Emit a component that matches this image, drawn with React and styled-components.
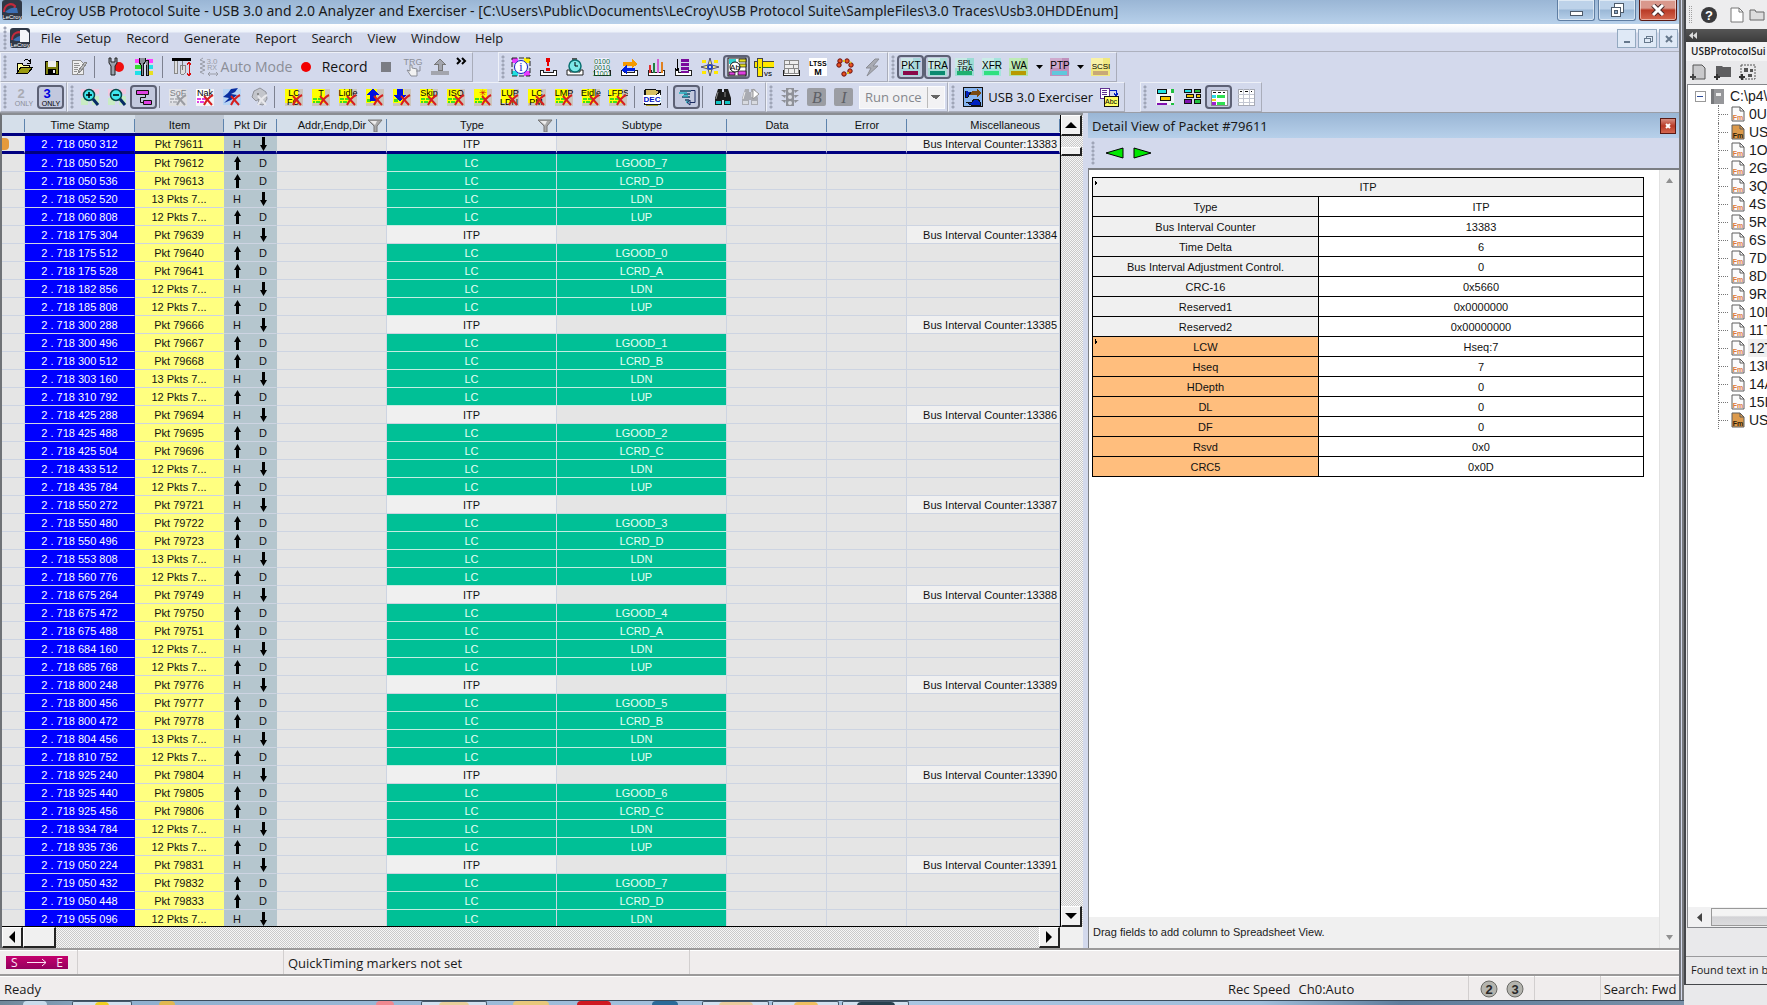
import React from 'react';
import styled, { createGlobalStyle, css } from 'styled-components';

const UI = '"Open Sans", "Noto Sans", sans-serif';
const ARIAL = '"Liberation Sans", Arial, sans-serif';

const Global = createGlobalStyle`
  *, *::before, *::after { box-sizing: border-box; }
  body { margin: 0; background: #e9e9eb; overflow: hidden; }
  button, select { font: inherit; color: inherit; }
  button { border: 0; background: none; padding: 0; margin: 0; }
  svg { display: block; flex: none; }
`;

/* ---------- frame ---------- */
const Desktop = styled.div`
  display: grid;
  grid-template-columns: minmax(0, 1fr) 83px;
  height: 100vh;
  font: 14px/18px ${UI};
  color: #1a1a1a;
`;
const AppWindow = styled.main`
  display: flex;
  flex-direction: column;
  min-width: 0;
  min-height: 0;
  background: #d3d9ec;
`;
const Framed = styled.div`
  display: flex;
  flex-direction: column;
  flex: 1;
  min-height: 0;
  border-right: 5px double #77797d;
`;
const TitleBar = styled.header`
  display: flex;
  align-items: flex-start;
  gap: 8px;
  height: 24px;
  padding: 0 2px;
  background: linear-gradient(#9ab6d5, #b7d0ea);
`;
const TitleText = styled.h1`
  flex: 1;
  margin: 0;
  font: 400 14px/22px "Noto Sans", sans-serif;
  white-space: nowrap;
  overflow: hidden;
`;
const CaptionGroup = styled.div`
  display: flex;
  gap: 3px;
`;
const Caption = styled.button`
  display: grid;
  place-items: center;
  width: 38px;
  height: 21px;
  border: 1px solid ${p => (p.$close ? '#5a1a14' : '#5f7ea3')};
  border-top: 0;
  border-radius: 0 0 3px 3px;
  box-shadow: inset 0 0 0 1px rgba(255, 255, 255, 0.5);
  background: ${p => (p.$close
    ? 'linear-gradient(#d9988c 0 40%, #b93a26 50%, #d4674f)'
    : 'linear-gradient(#bdd2e9 0 45%, #9ab7d6 50%, #b7d0ea)')};
`;
const MenuBar = styled.nav`
  display: flex;
  align-items: center;
  height: 28px;
  padding-left: 3px;
  border-bottom: 1px solid #adb1be;
  background: linear-gradient(#fff 0, #edf2fa 8px, #d3d9ec 9px);
`;
const MenuItem = styled.button`
  padding: 0 8px 0 7px;
  font: 13px/18px ${UI};
`;
const ChildButtons = styled.div`
  display: flex;
  gap: 2px;
  margin: 2px 1px 0 auto;
`;
const ChildButton = styled.button`
  display: grid;
  place-items: center;
  width: 19px;
  height: 19px;
  border: 1px solid #93a9c0;
  background: #dfe9f6;
`;

/* ---------- toolbars ---------- */
const ToolRow = styled.div`
  display: flex;
  height: ${p => p.$h}px;
  border-bottom: ${p => (p.$last ? '1px solid #9a9da6' : '0')};
`;
const Strip = styled.div`
  display: flex;
  align-items: center;
  padding: 0 2px;
  margin-right: ${p => p.$after || 0}px;
  border-right: 1px solid #a9adba;
  border-bottom: 1px solid #a9adba;
  border-top: 1px solid #eef1f8;
  border-left: 1px solid #eef1f8;
`;
const Grip = styled.i`
  width: 4px;
  height: 24px;
  margin-right: ${p => p.$after ?? 3}px;
  background: radial-gradient(circle at 2px 2px, #9fa5b7 1px, transparent 2px) 0 0 / 4px 4px;
`;
const Tool = styled.button`
  display: flex;
  align-items: center;
  justify-content: center;
  gap: 2px;
  width: ${p => p.$w || 27}px;
  height: 24px;
  flex: none;
  white-space: nowrap;
  font: ${p => p.$size || 14}px/18px ${UI};
  color: ${p => (p.$dim ? '#8b8e97' : '#111')};
  ${p => p.$on && css`
    border: 2px solid #5d6175;
    border-radius: 4px;
    background: #c2c8de;
  `}
`;
const Divider = styled.i`
  width: 1px;
  height: 22px;
  margin: 0 ${p => p.$r ?? 4}px 0 ${p => p.$l ?? 3}px;
  background: #7d8190;
`;
const RunSelect = styled.select`
  appearance: none;
  width: 86px;
  height: 23px;
  margin-left: 2px;
  padding: 0 0 0 5px;
  border: 1px solid #fafbfd;
  border-radius: 0;
  font: 13px/18px ${UI};
  color: #85878d;
  opacity: 1;
  background:
    linear-gradient(to bottom left, #666 50%, transparent 50%) right 3px center / 5px 5px no-repeat,
    linear-gradient(to bottom right, #666 50%, transparent 50%) right 8px center / 5px 5px no-repeat,
    linear-gradient(#bbb, #bbb) right 16px center / 1px 100% no-repeat,
    #f2f2f4;
  background:
    linear-gradient(to top left, transparent 50%, #666 50%) right 3px center / 5px 5px no-repeat,
    linear-gradient(to top right, transparent 50%, #666 50%) right 8px center / 5px 5px no-repeat,
    linear-gradient(#bbb, #bbb) right 16px center / 1px 100% no-repeat,
    #f2f2f4;
`;

/* ---------- work area ---------- */
const Work = styled.div`
  display: grid;
  grid-template-columns: minmax(0, 1083fr) 5px minmax(0, 591fr);
  flex: 1;
  min-height: 0;
`;
const GridPane = styled.section`
  display: grid;
  grid-template: minmax(0, 1fr) 21px / minmax(0, 1fr) 23px;
  min-height: 0;
  border-top: 2px solid #8a8d92;
  border-left: 2px solid #6f7276;
  background: #f0f0f0;
`;
const GridBody = styled.div`
  overflow: hidden;
  min-height: 0;
  border-bottom: 1px solid #000;
  background: #e5e5e5;
`;
const checker = 'repeating-conic-gradient(#c9c9c9 0 25%, #f6f6f6 0 50%) 0 0 / 2px 2px';
const VTrack = styled.div`
  display: flex;
  flex-direction: column;
  justify-content: space-between;
  border-left: 1px solid #000;
  background: ${checker};
`;
const HTrack = styled.div`
  display: flex;
  background: ${checker};
`;
const ScrollKey = styled.button`
  display: grid;
  place-items: center;
  width: ${p => p.$w || 21}px;
  height: ${p => p.$h || 21}px;
  margin-left: ${p => (p.$end ? 'auto' : '0')};
  background: #f0f0f0;
  border: solid #fff;
  border-width: 1px 2px 2px 1px;
  border-right-color: #222;
  border-bottom-color: #222;
`;
const VGroup = styled.div`
  display: flex;
  flex-direction: column;
  gap: 11px;
`;
const Sheet = styled.table`
  width: 100%;
  table-layout: fixed;
  border-collapse: separate;
  border-spacing: 0;
  font: 11px/14px ${ARIAL};
  color: #111;
  text-align: center;
`;
const HeadCell = styled.th`
  height: 21px;
  padding: 2px ${p => p.$padRight || 0}px 0 0;
  font-weight: 400;
  text-align: ${p => (p.$padRight ? 'right' : 'center')};
  border-bottom: 3px solid #000080;
  background:
    linear-gradient(#5d83ad, #5d83ad) right 4px / 1px 13px no-repeat,
    ${p => (p.$shade ? '#bfc8d4' : '#d5dfea')};
`;
const HeadFlex = styled.div`
  display: grid;
  grid-template-columns: 20px 1fr 20px;
  align-items: center;
`;
const fills = {
  lead: ['#e5e5e5', '#111'],
  time: ['#0000ff', '#fff'],
  item: ['#ffff80', '#111'],
  dir: ['#b5c6ce', '#111'],
  lc: ['#00c096', '#e8fff4'],
  itp: ['#f0f0f0', '#111'],
  none: ['#e5e5e5', '#111'],
};
const Cell = styled.td`
  height: 18px;
  padding: 0 ${p => (p.$right ? 2 : 0)}px 0 0;
  white-space: nowrap;
  text-align: ${p => (p.$right ? 'right' : 'center')};
  color: ${p => fills[p.$fill][1]};
  background: ${p => fills[p.$fill][0]};
  border-right: 1px solid ${p => (['time', 'item', 'dir'].includes(p.$fill) ? fills[p.$fill][0] : '#cdd4e2')};
  border-bottom: 1px solid ${p => (p.$fill === 'lc' ? '#c4eee2' : '#cdd4e2')};
  tr:first-child > & { border-bottom: 3px solid #000080; }
`;
const DirBox = styled.div`
  display: grid;
  grid-template-columns: 1fr 1fr;
  place-items: center;
`;
const Marker = styled.div`
  width: 7px;
  height: 12px;
  border-radius: 0 4px 4px 0;
  background: #e59a3c;
`;
const Splitter = styled.div`
  background: #d3d9ec;
`;

/* ---------- detail pane ---------- */
const DetailPane = styled.section`
  display: flex;
  flex-direction: column;
  min-height: 0;
`;
const DetailTitle = styled.header`
  display: flex;
  align-items: center;
  justify-content: space-between;
  height: 25px;
  padding: 0 3px 0 4px;
  background: linear-gradient(#9ab6d5, #b7d0ea);
`;
const DetailHeading = styled.h2`
  margin: 0;
  font: 400 13px/20px "Noto Sans", sans-serif;
`;
const TinyClose = styled.button`
  display: grid;
  place-items: center;
  width: 16px;
  height: 16px;
  border: 1px solid #5a1a14;
  background: linear-gradient(#d68d80, #b93a26 50%, #d4674f);
`;
const DetailTools = styled.div`
  display: flex;
  align-items: center;
  height: 30px;
  padding-left: 3px;
`;
const DetailBody = styled.div`
  display: grid;
  grid-template: minmax(0, 1fr) 31px / minmax(0, 1fr) 20px;
  flex: 1;
  min-height: 0;
  border-top: 2px solid #7b7e83;
  border-left: 1px solid #7b7e83;
  background: #fff;
`;
const DetailSheetWrap = styled.div`
  padding: 7px 15px 0 3px;
`;
const DetailSheet = styled.table`
  width: 100%;
  table-layout: fixed;
  border-collapse: collapse;
  font: 11px/14px ${ARIAL};
  color: #111;
  text-align: center;
`;
const DCell = styled.td`
  height: ${p => p.$h || 20}px;
  padding: 0;
  font-weight: 400;
  border: 1px solid #000;
  background: ${p => p.$bg || '#fff'};
  ${p => p.$mark && css`
    background:
      linear-gradient(to top right, #000 50%, transparent 50%) 2px 2px / 3px 3px no-repeat,
      linear-gradient(to bottom right, #000 50%, transparent 50%) 2px 5px / 3px 3px no-repeat,
      ${p.$bg};
  `}
`;
const Hint = styled.p`
  margin: 0;
  padding: 8px 4px;
  font: 11px/14px ${ARIAL};
  background: #f0f0f0;
`;
const SoftTrack = styled.div`
  grid-row: 1 / 3;
  grid-column: 2;
  display: flex;
  flex-direction: column;
  align-items: center;
  justify-content: space-between;
  padding: 8px 0;
  border-left: 1px solid #e2e2e2;
  background: #efefef;
`;

/* ---------- bottom ---------- */
const Bar = styled.footer`
  display: flex;
  height: 26px;
  border-top: 2px solid #9b9a9a;
  background: #f0eded;
  box-shadow: inset 0 1px #fff;
`;
const Pane = styled.div`
  display: flex;
  align-items: center;
  gap: 8px;
  width: ${p => (p.$w ? `${p.$w}px` : 'auto')};
  flex: ${p => (p.$w ? 'none' : 1)};
  justify-content: ${p => p.$justify || 'flex-start'};
  padding: 1px 4px 0;
  white-space: nowrap;
  font: 13px/18px ${UI};
  border-left: ${p => (p.$line ? '1px solid #d2cfcf' : '0')};
`;
const SpanMark = styled.button`
  display: flex;
  align-items: center;
  justify-content: space-between;
  width: 62px;
  height: 13px;
  margin-left: 2px;
  padding: 0 5px;
  font: 12px/13px ${UI};
  color: #ffe4f6;
  background: linear-gradient(#c4006c, #94005f);
`;
const TaskBar = styled.div`
  display: flex;
  height: 5px;
  border-top: 1px solid #3c4c5c;
  background: linear-gradient(90deg, #6f8799 0, #8fb0cf 120px, #a9c6e2 900px, #a0bedb 1260px, #5e7d9c 1400px, #7890a8);
`;
const TaskItem = styled.i`
  display: flex;
  justify-content: center;
  width: ${p => p.$w}px;
  margin-left: ${p => p.$gap}px;
  border: ${p => (p.$open ? '1px solid #45586a' : '0')};
  border-bottom: 0;
  border-radius: 2px 2px 0 0;
  background: ${p => (p.$open ? '#d3e2f0' : 'transparent')};
  &::after { content: ''; width: ${p => p.$dot}px; height: 4px; border-radius: 4px 4px 0 0; background: ${p => p.$c}; }
`;

/* ---------- neighbour application ---------- */
const Side = styled.aside`
  display: flex;
  flex-direction: column;
  min-width: 0;
  overflow: hidden;
  background: #e9e9eb;
`;
const SideWindow = styled.div`
  display: flex;
  flex-direction: column;
  flex: 1;
  margin-bottom: 20px;
  border-left: 2px solid #45474b;
  border-bottom: 1px solid #45474b;
  white-space: nowrap;
`;
const SideTools = styled.div`
  display: flex;
  align-items: center;
  gap: 5px;
  height: 29px;
  padding-left: 2px;
  overflow: hidden;
  background: #ededee;
`;
const SideStrip = styled.div`
  height: 13px;
  padding: 0 3px;
  color: #ddd;
  display: flex;
  align-items: center;
  background: linear-gradient(#565656, #3c3c3c);
`;
const SideTab = styled.h2`
  height: 19px;
  margin: 0;
  padding-left: 5px;
  font: 600 10px/18px ${UI};
  background: #f3f3f4;
  color: #222;
`;
const SideIcons = styled.div`
  display: flex;
  align-items: center;
  gap: 8px;
  height: 23px;
  padding-left: 4px;
  overflow: hidden;
`;
const Tree = styled.ul`
  flex: 1;
  margin: 0 0 0 1px;
  padding: 2px 0 0 6px;
  list-style: none;
  overflow: hidden;
  border: solid #85878b;
  border-width: 1px 0 0 1px;
  background: #fff;
  font: 14px/18px ${ARIAL};
`;
const TreeRow = styled.li`
  display: flex;
  align-items: center;
  height: 18px;
  gap: ${p => (p.$root ? 5 : 3)}px;
  margin-left: ${p => (p.$root ? 0 : 24)}px;
  border-left: ${p => (p.$root ? '0' : '1px dotted #777')};
`;
const TreeText = styled.span`
  padding-left: 1px;
  background: ${p => (p.$hot ? '#efefef' : 'none')};
`;
const Stub = styled.i`
  flex: none;
  width: 9px;
  border-top: 1px dotted #777;
`;
const SideScroll = styled.div`
  display: flex;
  align-items: center;
  gap: 9px;
  height: 21px;
  margin-left: 1px;
  padding-left: 9px;
  border: solid #85878b;
  border-width: 0 0 1px 1px;
  background: #f1f1f2;
`;
const SideThumb = styled.div`
  flex: 1;
  height: 18px;
  border: 1px solid #999;
  border-right: 0;
  background: linear-gradient(#f4f4f4 40%, #d3d3d6 50%, #dcdcde);
`;
const SideFoot = styled.p`
  height: 28px;
  margin: 28px 0 0;
  padding: 4px 0 0 5px;
  border-top: 1px solid #9a9a9c;
  font: 11px/18px ${UI};
`;

/* ---------- drawings ---------- */
const Px = ({ w = 20, h = 20, children, soft }) => (
  <svg width={w} height={h} viewBox={`0 0 ${w} ${h}`} shapeRendering={soft ? 'auto' : 'crispEdges'} aria-hidden="true">
    {children}
  </svg>
);
const T = ({ x = 10, y, s = 8, c = '#000', b, children, a = 'middle', f = 'Liberation Sans' }) => (
  <text x={x} y={y} fontSize={s} fill={c} fontWeight={b ? 700 : 400} textAnchor={a} fontFamily={f}>{children}</text>
);
const Cross = ({ c = '#d61f1f' }) => (
  <path d="M9 9l8 9M18 8c-4 2-7 6-9 10" stroke={c} strokeWidth="2" fill="none" shapeRendering="auto" />
);
const FilterArt = ({ t, t2, bg = '#ccc5bd', fg = '#ffff00', dash = '#3fe01a', cross, c }) => (
  <Px>
    <path fill={bg} d="M1 2h18v17H1z" />
    <path fill={fg} d="M1 2h13v14H1z" />
    {!t2 && <path fill={dash} d="M2 11h4v2H2zM7 11h5v2H7zM2 14h2v2H2zM5 14h4v2H5z" />}
    <T y={9} s={9} c={c}>{t}</T>
    {t2 && <T y={18} x={9} s={9} c={c}>{t2}</T>}
    <Cross c={cross} />
  </Px>
);
const ArrowFilter = ({ up }) => (
  <Px>
    <path fill="#ccc5bd" d="M1 2h18v17H1z" /><path fill="#ffff00" d="M1 2h11v14H1z" />
    <path fill="#3fe01a" d="M2 12h4v3H2z" />
    <path fill="#0010e0" d={up ? 'M8 1l6 7h-3v6H5V8H2z' : 'M8 15l6-7h-3V2H5v6H2z'} />
    <Cross />
  </Px>
);
const TagArt = ({ t, t2, bar, bg, to = '#e6f4f0', s = 11 }) => (
  <svg width="20" height="20" viewBox="0 0 20 20" aria-hidden="true">
    <rect x="0" y="1" width="19" height="18" fill={bg} />
    <rect x="0" y="1" width="12" height="10" fill={to} opacity=".6" />
    {t2 ? <><T y={8} s={8}>{t}</T><T y={14} s={8}>{t2}</T></> : <T y={12} s={s}>{t}</T>}
    <rect x="2" y="14" width="15" height="4" fill={bar} />
  </svg>
);
const Tray = <path d="M2 13v5h16v-5h-3v2H5v-2z" fill="#fff" stroke="#222" />;
const Logo = ({ doc }) => (
  <Px soft>
    <rect width="20" height="20" rx="3" fill="#303846" />
    <path d="M2 12C2 5 9 2 13 6l-2 7" fill="none" stroke="#c32a3c" strokeWidth="2" />
    <path d="M3 12c4-4 8-5 12-4l1 5H6z" fill="#3c6fb4" />
    {doc && <path d="M10 2h6l3 3v9h-9z" fill="#f4f6fa" />}
    <T y={19} s={6} c="#fff">LeCroy</T>
  </Px>
);
const Tri = ({ d, c = '#000', w = 10, h = 10 }) => <Px w={w} h={h} soft><path d={d} fill={c} /></Px>;
const Funnel = () => (
  <Px w={16} h={13} soft>
    <path d="M1 1h14l-5 6v6H7V7z" fill="#a9a9a9" stroke="#777" />
    <path d="M3 2h7L8 6z" fill="#ececec" />
  </Px>
);
const Arrow = ({ up }) => (
  <Px w={9} h={14} soft><path d={up ? 'M4.500 0L8 6H6v8H3V6H1z' : 'M4.500 14L8 8H6V0H3v8H1z'} /></Px>
);
const Magnifier = ({ plus }) => (
  <Px soft>
    <path d="M1 2h8v7H1zM11 2h8v5h-8z" fill="#f3c9e0" /><path d="M1 11h7v7H1zM12 9h7v9h-7z" fill="#c9ecc4" />
    <circle cx="9" cy="8" r="5.500" fill="#41e8f0" stroke="#084848" strokeWidth="1.500" />
    <path d={plus ? 'M6 8h6M9 5v6' : 'M6 8h6'} stroke="#000" strokeWidth="1.500" />
    <path d="M13 12l5 6" stroke="#062a66" strokeWidth="3" />
  </Px>
);
const Binoculars = ({ dim }) => (
  <Px soft>
    <path d="M5 2h4v3h2V2h4l3 9v7h-7v-5H9v5H2v-7z" fill={dim ? '#a9abb2' : '#1c1c1c'} />
    <path d="M3 14h5v3H3zM12 14h5v3h-5z" fill={dim ? '#d8dae0' : '#12c4c4'} />
    <path d="M5 5l-2 7M12 5v5" stroke={dim ? '#eee' : '#8a8a8a'} />
    {dim && <path d="M13 2l6 5-6 5z" fill="#fff" stroke="#999" />}
  </Px>
);
const A = {
  open: <Px><path d="M3 16V6h5l1 2h6v2" fill="#ffff9c" stroke="#000" /><path d="M3 16l4-6h12l-5 6z" fill="#9a9a10" stroke="#000" /><path d="M10 4c2-2 5-2 6 1m0-3v4h-3" fill="none" stroke="#000" /></Px>,
  save: <Px><path d="M4 4h13v13H4z" fill="#7d8010" stroke="#000" /><path d="M7 4h8v6H7z" fill="#eee" /><path d="M7 12h8v5H7z" fill="#000" /><path d="M12 13h2v3h-2z" fill="#eee" /></Px>,
  edit: <Px><path d="M4 3h8l3 3v11H4z" fill="#eee" stroke="#909090" /><path d="M6 6h5M6 8h6M6 10h4M6 12h4M6 14h3" stroke="#909090" /><path d="M17 5l-6 8-1 3 3-2 6-8z" fill="#bbb" stroke="#888" /></Px>,
  wrench: <Px soft><circle cx="14" cy="10" r="5" fill="#f01010" /><path d="M4 1v5l2 3v9h4V9l2-3V1H10v4H6V1z" fill="#9aa2ac" stroke="#222" /></Px>,
  setup: <Px><path d="M1 2h6v4H1zM13 2h6v4h-6z" fill="#ff40ff" /><path d="M1 8h6v4H1z" fill="#30e030" /><path d="M13 8h6v4h-6zM1 14h6v4H1z" fill="#20e0e8" /><path d="M13 14h6v4h-6z" fill="#e8e020" /><path d="M5 1v4l2 3v10h2V8l2-3V1M11 3h3v15h-2V8" fill="#8a9098" stroke="#111" /></Px>,
  probe: <Px><path d="M0 1h19v3H0z" fill="#000" /><path d="M2 4v12h3V4M8 8v8q3 3 5 0V8z" fill="#ddd" stroke="#888" /><path d="M10 4v9" stroke="#777" /><path d="M17 6v12M15 8l2-3 2 3M15 16l2 3 2-3" stroke="#d81010" fill="none" /></Px>,
  rx: <Px soft><path d="M4 1l-3 2 5 2-5 2 5 2-5 2 5 2-5 2 4 2" stroke="#999ca6" fill="none" /><T x={13} y={7} s={8} c="#999ca6">3.0</T><T x={13} y={13} s={7} c="#999ca6">RX</T><path d="M9 17h10M11 15l-2 2 2 2M17 15l2 2-2 2" stroke="#999ca6" fill="none" /></Px>,
  dot: <Px w={12} h={12} soft><circle cx="6" cy="6" r="5" fill="#f20000" /></Px>,
  stop: <Px><path d="M5 5h10v10H5z" fill="#7b7d84" /></Px>,
  trg: <Px soft><T y={8} s={9} c="#8b8e97">TRG</T><path d="M7 8v6l-3-1 4 6h6v-7l-5-1V8z" fill="#f2f2f2" stroke="#8b8e97" /><path d="M17 9v5h-4" fill="none" stroke="#8b8e97" /></Px>,
  eject: <Px><path d="M10 2l5 5h-3v6H8V7H5z" fill="#a3a5ad" stroke="#777" /><path d="M1 14h18v4H1z" fill="#a3a5ad" /></Px>,
  info: <Px soft><path d="M1 1h6v5H1zM13 14h6v5h-6z" fill="#e83cff" /><path d="M13 1h6v5h-6z" fill="#fff000" /><path d="M1 14h6v5H1z" fill="#20e0e0" /><rect x="1" y="1" width="18" height="18" fill="none" stroke="#222" strokeDasharray="5 2" /><circle cx="10" cy="10" r="6.500" fill="#fff" stroke="#1020c0" /><T y={14} s={12} c="#1020c0" f="Liberation Serif">i</T></Px>,
  alert: <Px>{Tray}<path d="M8 1h4l-1 8H9zM8 11h4v3H8z" fill="#e80000" /></Px>,
  clock: <Px soft>{Tray}<path d="M7 1h5v3H7z" fill="#555" /><circle cx="10" cy="9" r="6" fill="#7de8e8" stroke="#087070" strokeWidth="1.500" /><path d="M10 5v4h3" stroke="#000" fill="none" /></Px>,
  bits: <Px>{Tray}<path d="M3 1h14v15H3z" fill="#eef" /><T y={7} s={7} c="#0a6a30">0100</T><T y={13} s={7} c="#0a6a30">0010</T><T y={19} s={7} c="#0a6a30">11001</T></Px>,
  swap: <Px>{Tray}<path d="M4 5h9V2l6 5-6 4V9H4z" fill="#f59a00" /><path d="M16 11H8V8l-6 5 6 4v-3h8z" fill="#0020e0" /></Px>,
  chart: <Px>{Tray}<path d="M3 8h2v8H3z" fill="#e03030" /><path d="M7 6h2v10H7z" fill="#208040" /><path d="M11 2h2v14h-2z" fill="#d060d0" /><path d="M15 5h2v11h-2z" fill="#e08020" /></Px>,
  stack: <Px>{Tray}<path d="M4 2v12M2 11l2 3 2-3" stroke="#000" fill="none" /><path d="M8 2h8v3H8zM8 6h8v3H8zM8 10h8v3H8zM8 14h8v2H8z" fill="#7a0a9c" /></Px>,
  star: <Px soft><path d="M2 3h4v3H2zM14 3h4v3h-4zM2 14h4v3H2zM14 14h4v3h-4z" fill="#ffe800" /><path d="M10 1l2 7 7 2-7 2-2 7-2-7-7-2 7-2z" fill="#fff27a" stroke="#303060" strokeWidth=".8" /><circle cx="10" cy="10" r="3" fill="#2040c0" /><circle cx="10" cy="10" r="1" fill="#fff" /></Px>,
  ab: <Px soft><rect x="1" y="1" width="18" height="18" fill="#fff" stroke="#111" /><path d="M2 2h7v5H2z" fill="#30d0d0" /><path d="M12 2h7v3h-7zM12 7h7v3h-7z" fill="#e8e020" stroke="#111" strokeWidth=".7" /><path d="M11 14h8v4h-8zM2 15h6v3H2z" fill="#e040e0" stroke="#111" strokeWidth=".7" /><circle cx="8" cy="10" r="5" fill="#fff" stroke="#111" /><T x={8} y={13} s={8}>Ab</T></Px>,
  ruler: <Px><path d="M0 4h20v6H0z" fill="#ffe800" stroke="#444" /><path d="M3 1h5v18H3z" fill="#ffe800" stroke="#444" /><path d="M2 10h16" stroke="#208020" strokeDasharray="2 1" /><T x={14} y={19} s={8}>vs</T></Px>,
  calc: <Px>{Tray}<path d="M3 3h14v13H3z" fill="#eee" stroke="#888" /><path d="M3 7h14M3 11h14M8 3v4M12 7v4M7 11v5M13 11v5" stroke="#888" /></Px>,
  ltssm: <Px><path d="M1 1h18v18H1z" fill="#fff" /><T y={9} s={7} b>LTSS</T><T y={18} s={9} b>M</T></Px>,
  chain: <Px soft>{[[5, 4], [12, 4], [16, 8], [15, 14], [9, 17], [4, 8]].map(([x, y]) => <circle key={`${x}-${y}`} cx={x} cy={y} r="2.200" fill="#e85020" stroke="#6a1010" />)}<path d="M8 4h2M15 5l1 1M12 16h2" stroke="#d8c020" strokeWidth="2" /></Px>,
  bolt: <Px soft><path d="M13 2L4 11h5l-4 8L16 9h-5l6-7z" fill="#a9abb3" stroke="#8b8d95" /></Px>,
  lanes: <Px soft><path d="M2.500 3.500h12v4h-12zM9.500 13.500h8v4h-8z" fill="#e040e0" stroke="#111" /><path d="M11.500 8v2.500h-5v5H9" stroke="#111" fill="none" /></Px>,
  run: <Px soft><path d="M1 2h18v16H1z" fill="#b8d4f4" /><path d="M9 2l7-1-3 4-4 2 6 1-6 5-7 3 5-5-6-1 5-4z" fill="#0a2ea0" /><Cross /></Px>,
  lion: <Px soft><path d="M3 10l2-6 6-3 6 4 1 7-4 6-5-1 1-5-3 2z" fill="#c3c5cb" stroke="#8f9198" /><circle cx="9" cy="7" r="1" fill="#777" /><Cross c="#e8e8ec" /></Px>,
  dec: <Px><path d="M2 3h16v14H2z" fill="#fff" stroke="#111" /><path d="M3 2h9l6 3-4 3H4z" fill="#d8c060" stroke="#111" /><path d="M1 8h18v8H1z" fill="#fff" /><T y={15} s={8} c="#0010c0" b>DEC</T><path d="M4 18h12" stroke="#b0a020" /></Px>,
  flow: <Px soft><path d="M3 4h11M7 7h6M5 10h8M8 13h4" stroke="#1b4d6c" strokeWidth="1.500" /><path d="M2 6h8M6 9h5M9 15h3" stroke="#20b0c0" strokeWidth="1.500" /><path d="M14 3.500h4v12h-5M13 18v-5l-3 2.500z" stroke="#1a2a60" fill="none" /></Px>,
  light: <Px soft><path d="M6 1h8v18H6z" fill="#8f9198" /><path d="M1 3h5l-1 3zM1 8h5l-1 3zM1 13h5l-1 3zM19 3h-5l1 3zM19 8h-5l1 3zM19 13h-5l1 3z" fill="#8f9198" /><g fill="#d9dbe2"><circle cx="10" cy="4" r="2" /><circle cx="10" cy="10" r="2" /><circle cx="10" cy="16" r="2" /></g></Px>,
  usb: <Px><path d="M0 0h20v20H0z" fill="#86b4f0" stroke="#111" strokeWidth="2" /><path d="M9 4h5V2l5 4-5 4V8H7z" fill="#7a4a10" /><path d="M2 4v6h3l3-5M3 15h6l2-3h4l2 3v3H8z" fill="#0020c0" stroke="#111" /></Px>,
  abc: <Px><path d="M1 1h9v10H1z" fill="#fff" stroke="#603090" /><path d="M3 3h5M3 5h5M3 7h5" stroke="#603090" /><path d="M11 3h6v5M15 6l2 3 2-3" stroke="#0020c0" fill="none" /><path d="M5 9h14v10H5z" fill="#ffff60" stroke="#111" /><T x={12} y={17} s={7}>Abc</T></Px>,
  v1: <Px><path d="M1 2h18v16H1z" fill="#f2f4f8" /><path d="M2 2h9v4H2z" fill="#20e0e0" stroke="#111" /><path d="M16 2h3v4h-3z" fill="#20c040" /><path d="M5 9h10v4H5z" fill="#f5c800" stroke="#111" /><path d="M2 16h10v2H2z" fill="#8010b0" /><path d="M16 16h3v2h-3z" fill="#20c040" /></Px>,
  v2: <Px><path d="M2 2h7v3H2z" fill="#20e0e0" stroke="#111" /><path d="M12 2h6v3h-6z" fill="#20c040" stroke="#111" /><path d="M4 7h7v3H4z" fill="#f5c800" stroke="#111" /><path d="M14 7h4v3h-4z" fill="#f5c800" stroke="#111" /><path d="M2 12h7v4H2z" fill="#8010b0" stroke="#111" /><path d="M12 12h6v4h-6z" fill="#20c040" stroke="#111" /></Px>,
  v3: <Px><path d="M2 3h16v15H2z" fill="#fff" stroke="#888" /><path d="M4 5h3M9 5h3M14 5h2" stroke="#111" /><path d="M3 8h4v3H3z" fill="#30d8e8" /><path d="M8 8h8v3H8zM8 15h8v3H8z" fill="#30e050" /><path d="M3 12h4v2H3z" fill="#f5d020" /><path d="M3 15h4v3H3z" fill="#a020d0" /></Px>,
  v4: <Px><path d="M2 2h16v16H2z" fill="#fff" stroke="#a8abb5" /><path d="M2 7h16M2 11h16M2 15h16M7 2v16M13 2v16" stroke="#c3c7d2" /><path d="M4 4h2M9 4h3M15 4h1" stroke="#111" /></Px>,
};

const onlyArt = (n, c, k) => (
  <Px soft><T y={11} x={n === '3' ? 6 : 7} s={13} c={c} b>{n}</T><T y={19} s={7} c={k}>ONLY</T></Px>
);
const Italic = ({ t }) => (
  <Px soft><rect x="0" y="1" width="19" height="18" rx="2" fill="#9b9da3" /><text x="10" y="16" fontSize="16" fontStyle="italic" fontFamily="Liberation Serif" textAnchor="middle" fill="#5e6066">{t}</text></Px>
);
const page = (orange) => (
  <Px w={14} h={16} soft>
    <path d="M1 1h8l4 4v10H1z" fill={orange ? '#dc9a4c' : '#fbfbfb'} stroke="#5c5c5c" />
    <path d="M9 1v4h4" fill="none" stroke="#5c5c5c" />
    <T x={7} y={14} s={7} b c={orange ? '#2c1a06' : '#dd7a3c'}>Fm</T>
  </Px>
);

/* ---------- data ---------- */
const menus = ['File', 'Setup', 'Record', 'Generate', 'Report', 'Search', 'View', 'Window', 'Help'];
const blocks = [
  [79611, 13, ['718 050 312', '718 050 520', '718 050 536', '718 052 520', '718 060 808'], '7', 'D'],
  [79639, 12, ['718 175 304', '718 175 512', '718 175 528', '718 182 856', '718 185 808'], '0', 'A'],
  [79666, 13, ['718 300 288', '718 300 496', '718 300 512', '718 303 160', '718 310 792'], '1', 'B'],
  [79694, 12, ['718 425 288', '718 425 488', '718 425 504', '718 433 512', '718 435 784'], '2', 'C'],
  [79721, 13, ['718 550 272', '718 550 480', '718 550 496', '718 553 808', '718 560 776'], '3', 'D'],
  [79749, 12, ['718 675 264', '718 675 472', '718 675 488', '718 684 160', '718 685 768'], '4', 'A'],
  [79776, 13, ['718 800 248', '718 800 456', '718 800 472', '718 804 456', '718 810 752'], '5', 'B'],
  [79804, 12, ['718 925 240', '718 925 440', '718 925 456', '718 934 784', '718 935 736'], '6', 'C'],
  [79831, 12, ['719 050 224', '719 050 432', '719 050 448', '719 055 096'], '7', 'D'],
];
const rows = blocks.flatMap(([first, count, times, good, crd], b) => times.map((t, i) => ({
  time: `2 . ${t}`,
  item: i < 3 ? `Pkt ${first + i}` : `${i === 3 ? count : 12} Pkts 7...`,
  host: i === 0 || i === 3,
  sub: ['', `LGOOD_${good}`, `LCRD_${crd}`, 'LDN', 'LUP'][i],
  misc: i === 0 ? `Bus Interval Counter:${13383 + b}` : '',
})));
const detail = [
  ['Type', 'ITP'], ['Bus Interval Counter', '13383'], ['Time Delta', '6'],
  ['Bus Interval Adjustment Control.', '0'], ['CRC-16', '0x5660'], ['Reserved1', '0x0000000'],
  ['Reserved2', '0x00000000'], ['LCW', 'Hseq:7'], ['Hseq', '7'], ['HDepth', '0'], ['DL', '0'],
  ['DF', '0'], ['Rsvd', '0x0'], ['CRC5', '0x0D'],
];
const files = ['0U', 'US', '1O', '2G', '3Q', '4S', '5R', '6S', '7D', '8D', '9R', '10I', '11T', '12T', '13U', '14A', '15I', 'US'];
const widths = [23, 110, 89, 53, 110, 170, 170, 100, 80];

const filterTools = [
  ['LC FC', <FilterArt t="LC" t2="FC" />], ['Training', <FilterArt t="T" />], ['Lidle', <FilterArt t="Lidle" />],
  ['Upstream', <ArrowFilter up />], ['Downstream', <ArrowFilter />], ['Skip', <FilterArt t="Skip" />],
  ['ISO', <FilterArt t="ISO" />], ['Errors', <FilterArt t="✳" c="#d01010" />], ['LUP LDN', <FilterArt t="LUP" t2="LDN" />],
  ['LC PM', <FilterArt t="LC" t2="PM" />], ['LMP', <FilterArt t="LMP" />], ['Eidle', <FilterArt t="Eidle" />],
  ['LFPS', <FilterArt t="LFPS" />],
];

const Btn = ({ label, art, ...rest }) => <Tool aria-label={label} {...rest}>{art}</Tool>;

function Toolbars() {
  return (
    <>
      <ToolRow $h={30}>
        <Strip $after={25}>
          <Grip />
          <Btn label="Open" art={A.open} /><Btn label="Save" art={A.save} /><Btn label="Edit" art={A.edit} />
          <Divider $r={6} />
          <Btn label="Recording options" art={A.wrench} /><Btn label="Display options" art={A.setup} $w={32} />
          <Divider $r={5} $l={2} />
          <Btn label="Probe" art={A.probe} />
          <Tool $w={101} $dim>{A.rx}Auto Mode</Tool>
          <Tool $w={76}>{A.dot}&nbsp;&nbsp;Record</Tool>
          <Btn label="Stop" art={A.stop} /><Btn label="Trigger" art={A.trg} /><Btn label="Upload" art={A.eject} />
          <Tool aria-label="More" $w={17}><Px w={11} h={20} soft><path d="M1 1l3 3-3 3M6 1l3 3-3 3" fill="none" stroke="#000" strokeWidth="2" /></Px></Tool>
        </Strip>
        <Strip>
          <Grip $after={2} />
          {['info', 'alert', 'clock', 'bits', 'swap', 'chart', 'stack', 'star', 'ab', 'ruler', 'calc', 'ltssm', 'chain', 'bolt'].map(k => (
            <Btn key={k} label={k} art={A[k]} $on={k === 'ab'} />
          ))}
        </Strip>
        <Strip>
          <Grip $after={2} />
          <Btn label="Packet" $on art={<TagArt t="PKT" s={10} bar="#8a0a4a" bg="#a8d8dc" />} />
          <Btn label="Transaction" $on art={<TagArt t="TRA" s={10} bar="#0a8a70" bg="#a8dcd4" />} />
          <Btn label="Split" art={<TagArt t="SPL" t2="TRA" bar="#20b070" bg="#9cdcd4" />} />
          <Btn label="Transfer" art={<TagArt t="XFR" s={10} bar="#30e080" bg="#a4e4dc" />} />
          <Btn label="Wire adapter" art={<TagArt t="WA" s={10} bar="#b89a00" bg="#b0e0a8" to="#c8f4c0" />} />
          <Tool aria-label="Wire adapter list" $w={14}><Tri w={7} h={4} d="M0 0h7L3.500 4z" /></Tool>
          <Btn label="PTP" art={<TagArt t="PTP" s={10} bar="#60c8dc" bg="#c090bc" to="#d8bcd8" />} />
          <Tool aria-label="PTP list" $w={14}><Tri w={7} h={4} d="M0 0h7L3.500 4z" /></Tool>
          <Btn label="SCSI" art={<TagArt t="SCSI" s={8} bar="#c8a878" bg="#f0e880" to="#fff8c0" />} />
        </Strip>
      </ToolRow>
      <ToolRow $h={31} $last>
        <Strip>
          <Grip />
          <Btn label="USB 2 only" art={onlyArt('2', '#a9abb3', '#8b8e97')} />
          <Btn label="USB 3 only" $on art={onlyArt('3', '#0000e0', '#000')} />
        </Strip>
        <Strip>
          <Grip $after={2} />
          <Btn label="Zoom in" art={<Magnifier plus />} /><Btn label="Zoom out" art={<Magnifier />} />
          <Btn label="Wrap" $on art={A.lanes} />
          <Divider $l={2} $r={4} />
          <Btn label="SoF" art={<FilterArt t="SoF" bg="#dcdde2" fg="#e4e5ea" dash="#b8bac0" cross="#9a9ca2" c="#7d7f86" />} />
          <Btn label="Nak" art={<FilterArt t="Nak" bg="#f4f4f6" fg="#fff" dash="#e040e0" />} />
          <Btn label="Chirp" art={A.run} /><Btn label="Suspend" art={A.lion} />
          <Divider $l={2} $r={5} />
          {filterTools.map(([l, art]) => <Btn key={l} label={l} art={art} />)}
          <Divider $r={3} /><Btn label="Decimal" art={A.dec} /><Divider $l={2} $r={5} />
          <Btn label="Navigate" $on art={A.flow} />
          <Divider $l={2} $r={6} />
          <Btn label="Find" art={<Binoculars />} /><Btn label="Find next" art={<Binoculars dim />} />
        </Strip>
        <Strip>
          <Grip />
          <Btn label="Traffic" art={A.light} /><Btn label="B" art={<Italic t="B" />} /><Btn label="I" art={<Italic t="I" />} />
          <RunSelect aria-label="Run mode" disabled><option>Run once</option></RunSelect>
        </Strip>
        <Strip $after={15}>
          <Grip $after={6} />
          <Tool $w={134} $size={13}>{A.usb}&nbsp;USB 3.0 Exerciser</Tool>
          <Btn label="Script" art={A.abc} />
        </Strip>
        <Strip>
          <Grip $after={4} />
          <Btn label="View 1" art={A.v1} /><Btn label="View 2" art={A.v2} />
          <Btn label="Spreadsheet" $on art={A.v3} /><Btn label="Table" art={A.v4} />
        </Strip>
      </ToolRow>
    </>
  );
}

function PacketGrid() {
  return (
    <GridPane>
      <GridBody>
        <Sheet>
          <colgroup>{widths.map((w, i) => <col key={i} style={{ width: w }} />)}<col /></colgroup>
          <thead>
            <tr>
              <HeadCell />
              <HeadCell>Time Stamp</HeadCell>
              <HeadCell $shade>Item</HeadCell>
              <HeadCell>Pkt Dir</HeadCell>
              <HeadCell><HeadFlex><i /><span>Addr,Endp,Dir</span><Funnel /></HeadFlex></HeadCell>
              <HeadCell><HeadFlex><i /><span>Type</span><Funnel /></HeadFlex></HeadCell>
              <HeadCell>Subtype</HeadCell>
              <HeadCell>Data</HeadCell>
              <HeadCell>Error</HeadCell>
              <HeadCell $padRight={20}>Miscellaneous</HeadCell>
            </tr>
          </thead>
          <tbody>
            {rows.map((r, i) => (
              <tr key={r.time}>
                <Cell $fill="lead">{i === 0 && <Marker />}</Cell>
                <Cell $fill="time">{r.time}</Cell>
                <Cell $fill="item">{r.item}</Cell>
                <Cell $fill="dir"><DirBox>{r.host ? <><span>H</span><Arrow /></> : <><Arrow up /><span>D</span></>}</DirBox></Cell>
                <Cell $fill="none" />
                <Cell $fill={r.sub ? 'lc' : 'itp'}>{r.sub ? 'LC' : 'ITP'}</Cell>
                <Cell $fill={r.sub ? 'lc' : 'none'}>{r.sub}</Cell>
                <Cell $fill="none" />
                <Cell $fill="none" />
                <Cell $fill={r.misc ? 'itp' : 'none'} $right>{r.misc}</Cell>
              </tr>
            ))}
          </tbody>
        </Sheet>
      </GridBody>
      <VTrack>
        <VGroup>
          <ScrollKey aria-label="Scroll up"><Tri w={12} h={6} d="M6 0l6 6H0z" /></ScrollKey>
          <ScrollKey aria-label="Scroll position" $h={9} />
        </VGroup>
        <ScrollKey aria-label="Scroll down"><Tri w={12} h={6} d="M6 6l6-6H0z" /></ScrollKey>
      </VTrack>
      <HTrack>
        <ScrollKey aria-label="Scroll left"><Tri w={6} h={12} d="M0 6l6-6v12z" /></ScrollKey>
        <ScrollKey aria-label="Scroll position" $w={33} />
        <ScrollKey aria-label="Scroll right" $end><Tri w={6} h={12} d="M6 6L0 0v12z" /></ScrollKey>
      </HTrack>
    </GridPane>
  );
}

function DetailView() {
  return (
    <DetailPane>
      <DetailTitle>
        <DetailHeading>Detail View of Packet #79611</DetailHeading>
        <TinyClose aria-label="Close detail view"><Px w={6} h={6} soft><path d="M1 1l4 4M5 1L1 5" stroke="#fff" strokeWidth="2" /></Px></TinyClose>
      </DetailTitle>
      <DetailTools>
        <Grip $after={6} />
        <Btn label="Previous packet" art={<Px w={20} h={14} soft><path d="M1 7l17-5v10z" fill="#00e800" stroke="#000" /></Px>} />
        <Btn label="Next packet" art={<Px w={20} h={14} soft><path d="M19 7L2 2v10z" fill="#00e800" stroke="#000" /></Px>} />
      </DetailTools>
      <DetailBody>
        <DetailSheetWrap>
          <DetailSheet>
            <colgroup><col style={{ width: '41%' }} /><col /></colgroup>
            <tbody>
              <tr><DCell as="th" colSpan={2} $h={19} $bg="#f0f0f0" $mark>ITP</DCell></tr>
              {detail.map(([k, v], i) => (
                <tr key={k}>
                  <DCell as="th" scope="row" $bg={i < 7 ? '#f0f0f0' : '#ffbe7d'} $mark={i === 7}>{k}</DCell>
                  <DCell>{v}</DCell>
                </tr>
              ))}
            </tbody>
          </DetailSheet>
        </DetailSheetWrap>
        <Hint>Drag fields to add column to Spreadsheet View.</Hint>
        <SoftTrack>
          <Tri w={7} h={5} d="M3.500 0L7 5H0z" c="#909090" /><Tri w={7} h={5} d="M3.500 5L7 0H0z" c="#909090" />
        </SoftTrack>
      </DetailBody>
    </DetailPane>
  );
}

const speed = n => (
  <Px w={18} h={18} soft><circle cx="9" cy="9" r="8" fill="#b4b4ae" stroke="#6a6a66" /><T x={9} y={14} s={13} b c="#2a2a2a">{n}</T></Px>
);

export default function App() {
  return (
    <>
      <Global />
      <Desktop>
        <AppWindow>
          <Framed>
            <TitleBar>
              <Logo />
              <TitleText>{'LeCroy USB Protocol Suite - USB 3.0 and 2.0 Analyzer and Exerciser - [C:\\Users\\Public\\Documents\\LeCroy\\USB Protocol Suite\\SampleFiles\\3.0 Traces\\Usb3.0HDDEnum]'}</TitleText>
              <CaptionGroup>
                <Caption aria-label="Minimize"><Px w={14} h={14}><path d="M1 8h12v4H1z" fill="#fff" stroke="#4d5a6a" /></Px></Caption>
                <Caption aria-label="Restore"><Px w={16} h={16}><path d="M5 1h9v9H5z" fill="#fff" stroke="#4d5a6a" /><path d="M2 5h9v9H2z" fill="#fff" stroke="#4d5a6a" /><path d="M5 8h3v3H5z" fill="#8aa6c6" stroke="#4d5a6a" /></Px></Caption>
                <Caption aria-label="Close" $close><Px w={14} h={12} soft><path d="M2 1l10 10M12 1L2 11" stroke="#4a2a2a" strokeWidth="5" /><path d="M2 1l10 10M12 1L2 11" stroke="#fff" strokeWidth="3" /></Px></Caption>
              </CaptionGroup>
            </TitleBar>
            <MenuBar>
              <Grip /><Logo doc />&nbsp;
              {menus.map(m => <MenuItem key={m}>{m}</MenuItem>)}
              <ChildButtons>
                <ChildButton aria-label="Minimize trace"><Px w={10} h={10}><path d="M2 7h6v2H2z" fill="#66788c" /></Px></ChildButton>
                <ChildButton aria-label="Restore trace"><Px w={10} h={10}><path d="M3 4V2h6v5H7M1 4h6v4H1z" fill="none" stroke="#66788c" /></Px></ChildButton>
                <ChildButton aria-label="Close trace"><Px w={10} h={10} soft><path d="M2 2l6 6M8 2L2 8" stroke="#66788c" strokeWidth="2" /></Px></ChildButton>
              </ChildButtons>
            </MenuBar>
            <Toolbars />
            <Work>
              <PacketGrid />
              <Splitter />
              <DetailView />
            </Work>
            <Bar>
              <Pane $w={77}><SpanMark aria-label="Start to end"><span>S</span><Px w={22} h={9} soft><path d="M1 4.500h19M16 1l4 3.500L16 8" fill="none" stroke="#ffe4f6" /></Px><span>E</span></SpanMark></Pane>
              <Pane $w={206} $line />
              <Pane $w={406} $line>QuickTiming markers not set</Pane>
              <Pane $line />
            </Bar>
            <Bar>
              <Pane>Ready</Pane>
              <Pane $w={244}><span>Rec Speed</span><span>Ch0:Auto</span></Pane>
              <Pane $w={66} $line $justify="center">{speed(2)}{speed(3)}</Pane>
              <Pane $w={66} $line />
              <Pane $w={79} $line $justify="center">Search: Fwd</Pane>
            </Bar>
          </Framed>
          <TaskBar>
            <TaskItem $w={50} $gap={10} $dot={24} $c="#c9dcec" />
            <TaskItem $w={60} $gap={12} $dot={14} $c="#f0d020" $open />
            <TaskItem $w={50} $gap={10} $dot={16} $c="#e0b850" />
            <TaskItem $w={50} $gap={168} $dot={18} $c="#f08890" />
            <TaskItem $w={66} $gap={11} $dot={30} $c="#e8cf9a" $open />
            <TaskItem $w={76} $gap={6} $dot={36} $c="#e8c87a" />
            <TaskItem $w={50} $gap={0} $dot={34} $c="#d01820" />
            <TaskItem $w={60} $gap={16} $dot={26} $c="#2a6a98" />
            <TaskItem $w={67} $gap={7} $dot={34} $c="#eacb9c" $open />
            <TaskItem $w={67} $gap={3} $dot={24} $c="#f0c060" $open />
            <TaskItem $w={67} $gap={3} $dot={38} $c="#28414f" $open />
          </TaskBar>
        </AppWindow>
        <Side>
          <SideWindow>
            <SideTools>
              <Px w={4} h={18}><path d="M1 0v18M3 0v18" stroke="#a0a0a0" strokeDasharray="1 1" /></Px>
              <Px w={22} h={18} soft><circle cx="12" cy="9" r="8" fill="#3a3a3c" /><T x={12} y={14} s={13} b c="#fff">?</T></Px>
              <Divider $l={0} $r={1} />
              <Px w={14} h={16} soft><path d="M1 1h8l4 4v10H1z" fill="#fff" stroke="#777" /><path d="M9 1v4h4" fill="none" stroke="#777" /></Px>
              <Px w={18} h={14} soft><path d="M1 12V2h5l1 2h8v8z" fill="#ddd" stroke="#666" /></Px>
            </SideTools>
            <SideStrip><Px w={8} h={7} soft><path d="M4 0L0 3.500 4 7zM8 0L4 3.500 8 7z" fill="#ddd" /></Px></SideStrip>
            <SideTab>USBProtocolSui</SideTab>
            <SideIcons>
              <Px w={16} h={17} soft><path d="M3 1h9l3 3v11H3z" fill="#c9c9cb" stroke="#555" /><path d="M0 13h6M3 10v6" stroke="#444" strokeWidth="2" /></Px>
              <Px w={17} h={17} soft><path d="M2 2h6l1 1h8v10H2z" fill="#5e5e60" /><path d="M0 13h6M3 10v6" stroke="#333" strokeWidth="2" /></Px>
              <Px w={17} h={17} soft><path d="M2 1h14v14H2z" fill="none" stroke="#555" strokeDasharray="2 1" /><path d="M5 4h4v4H5zM11 5h3v3h-3zM9 10h4v3H9z" fill="#555" /><path d="M0 13h6M3 10v6" stroke="#333" strokeWidth="2" /></Px>
            </SideIcons>
            <Tree>
              <TreeRow $root>
                <Px w={12} h={12}><rect x="1" y="1" width="10" height="10" fill="#fff" stroke="#999" /><path d="M3 6h6" stroke="#2a4a9a" /></Px>
                <Px w={13} h={15}><path d="M0 0h13v15H0z" fill="#77787b" /><path d="M3 0h10v15H3z" fill="#96979a" /><path d="M5 4h5v3H5z" fill="#eee" /></Px>
                <TreeText>C:\p4\</TreeText>
              </TreeRow>
              {files.map((f, i) => (
                <TreeRow key={i}><Stub />{page(f === 'US')}<TreeText $hot={f === '12T'}>{f}</TreeText></TreeRow>
              ))}
            </Tree>
            <SideScroll><Tri w={5} h={9} d="M5 0L0 4.500 5 9z" c="#444" /><SideThumb /></SideScroll>
            <SideFoot>Found text in b</SideFoot>
          </SideWindow>
        </Side>
      </Desktop>
    </>
  );
}
